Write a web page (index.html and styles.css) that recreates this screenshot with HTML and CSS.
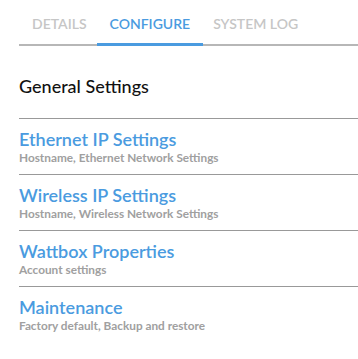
FILE: index.html
```html
<!DOCTYPE html>
<html lang="en">
<head>
    <meta charset="UTF-8">
    <meta name="viewport" content="width=device-width, initial-scale=1.0">
    <title>Configure</title>
    <link rel="stylesheet" href="styles.css">
</head>
<body>

    <div class="tabs">
        <a class="tab">DETAILS</a>
        <a class="tab active">CONFIGURE</a>
        <a class="tab">SYSTEM LOG</a>
    </div>

    <h2 class="section-title">General Settings</h2>

    <ul class="settings">
        <li class="setting">
            <a class="setting-name">Ethernet IP Settings</a>
            <span class="setting-desc">Hostname, Ethernet Network Settings</span>
        </li>
        <li class="setting">
            <a class="setting-name">Wireless IP Settings</a>
            <span class="setting-desc">Hostname, Wireless Network Settings</span>
        </li>
        <li class="setting">
            <a class="setting-name">Wattbox Properties</a>
            <span class="setting-desc">Account settings</span>
        </li>
        <li class="setting">
            <a class="setting-name">Maintenance</a>
            <span class="setting-desc">Factory default, Backup and restore</span>
        </li>
    </ul>

</body>
</html>
```

FILE: styles.css
```css
body {
    font-family: 'Lato', sans-serif;
    background: #fff;
    color: #111;
    margin: 0;
    padding: 0 0 0 19px;
}
.tabs {
    display: flex;
    padding-left: 13px;
    gap: 23px;
    border-bottom: 2px solid #b7b7b7;
    height: 46px;
    box-sizing: border-box;
}
.tab {
    font-size: 14px;
    font-weight: 600;
    color: #c6c6c6;
    padding-top: 15px;
    position: relative;
}
.tab.active {
    color: #4a9be0;
}
.tab.active::after {
    content: "";
    position: absolute;
    left: -13px;
    right: -13px;
    bottom: -2px;
    height: 3px;
    background: #4a9be0;
}
.section-title {
    font-size: 18px;
    font-weight: 500;
    margin: 0;
    padding: 29px 0 21px;
    border-bottom: 1px solid #999;
}
.settings {
    list-style: none;
    margin: 0;
    padding: 0;
}
.setting {
    display: flex;
    flex-direction: column;
    height: 56px;
    box-sizing: border-box;
    padding-top: 9px;
    border-bottom: 1px solid #999;
}
.setting:last-child {
    border-bottom: none;
}
.setting-name {
    font-size: 18px;
    font-weight: 600;
    color: #4a9be0;
    line-height: 22px;
}
.setting-desc {
    font-size: 11.8px;
    font-weight: 700;
    color: #a0a0a0;
    line-height: 14px;
    margin-top: 1px;
}
```
